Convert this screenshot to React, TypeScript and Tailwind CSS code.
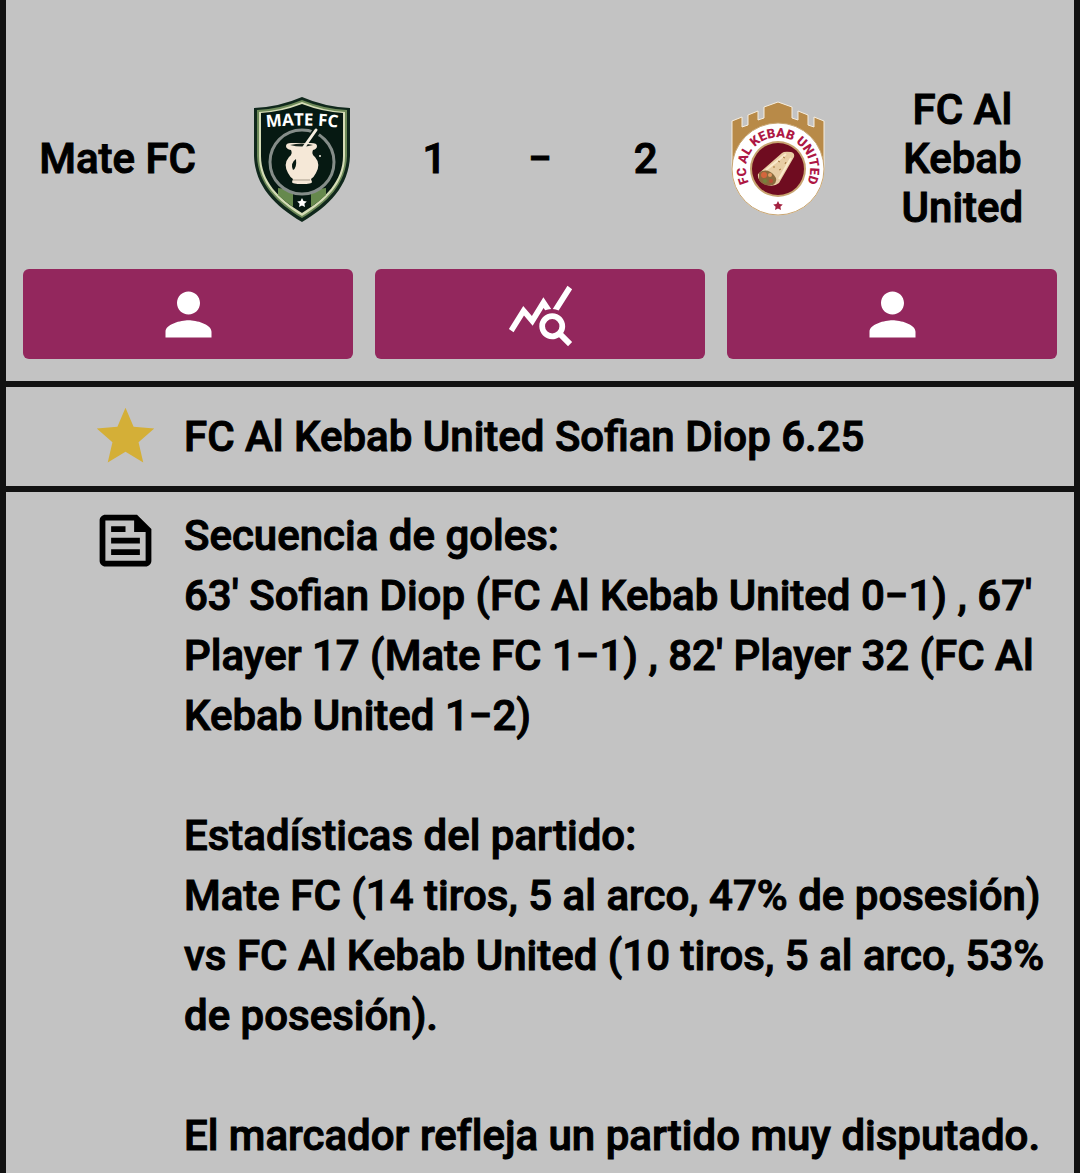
import {MdOutlineFeed, MdPerson, MdQueryStats, MdStar} from "react-icons/md";
import type {ReactNode} from "react";

type ActionButtonProps = {
  label: string;
  children: ReactNode;
};

type NoteRowProps = {
  icon: ReactNode;
  children: ReactNode;
  className?: string;
};

const goals = [
  {minute: 63, player: "Sofian Diop", team: "FC Al Kebab United", score: "0−1"},
  {minute: 67, player: "Player 17", team: "Mate FC", score: "1−1"},
  {minute: 82, player: "Player 32", team: "FC Al Kebab United", score: "1−2"}
];

const MateCrest = () => (
  <svg viewBox="0 0 98 126" className="w-[98px]" role="img" aria-label="Mate FC">
    <path
      d="M49 1 Q72 11 97 12 V60 C96 90 76 110 49 126 C22 110 2 90 1 60 V12 Q26 11 49 1Z"
      fill="#10281c"
    />
    <path
      d="M49 4 Q71 13 94 14 V60 C93 88 74 107 49 122 C24 107 5 88 4 60 V14 Q27 13 49 4Z"
      fill="#6d8a59"
    />
    <path
      d="M49 6 Q71 15 92 16 V60 C92 87 73 105 49 120 C25 105 6 87 6 60 V16 Q27 15 49 6Z"
      fill="#d5dcb6"
    />
    <path
      d="M49 8 Q70 16 90 17 V60 C90 85 72 103 49 117 C26 103 8 85 8 60 V17 Q28 16 49 8Z"
      fill="#061912"
    />
    <path d="M25 92 L40 94 V111 Q31 105 25 99Z" fill="#66894d" />
    <path d="M73 92 L58 94 V111 Q67 105 73 99Z" fill="#66894d" />
    <circle cx="49" cy="66" r="32" fill="#061912" stroke="#858d89" strokeWidth="3" />
    <path d="M51 54 L64 34" stroke="#061912" strokeWidth="8" />
    <path
      d="M33 50 Q33 47 38 47 H58 Q64 47 64 50 Q64 53 60 54 Q58 58 62 61 Q68 68 63 77 Q61 81 58 83 L59 86 Q59 88 49 88 Q39 88 39 86 L40 83 Q37 81 35 77 Q30 68 36 61 Q40 58 38 54 Q33 53 33 50Z"
      fill="#f5e8d7"
    />
    <path d="M37 49 Q49 46 60 49 Q49 52 37 49Z" fill="#18251c" />
    <path d="M51 51 L63 34" stroke="#f5eee0" strokeWidth="3" strokeLinecap="round" />
    <path d="M43 63 Q37 67 40 74 Q44 72 43 63Z" fill="#061912" />
    <path d="M40 84 H57" stroke="#a69c8b" strokeWidth="1" />
    <circle cx="67" cy="60" r="1" fill="#f5eee0" />
    <path
      d="M49 102 l1.5 3 3.3.4 -2.4 2.3 .6 3.3 -3-1.6 -3 1.6 .6-3.3 -2.4-2.3 3.3-.4Z"
      fill="#ffffff"
    />
    <path id="mate-arc" d="M8 32 Q49 27 90 32" fill="none" />
    <text
      fontSize="17"
      fontWeight="700"
      fill="#ffffff"
      className="font-['Open_Sans',sans-serif] [-webkit-text-stroke:0]"
    >
      <textPath href="#mate-arc" startOffset="50%" textAnchor="middle">
        MATE FC
      </textPath>
    </text>
  </svg>
);

const KebabCrest = () => (
  <svg
    viewBox="0 0 98 116"
    className="w-[98px]"
    role="img"
    aria-label="FC Al Kebab United"
  >
    <path
      d="M3 20 L13 16 V26 L19 24 V14 L29 10 V19 L35 17 V6 L49 1 L63 6 V17 L69 19 V10 L79 14 V24 L85 26 V16 L95 20 V68 A46 46 0 0 1 3 68Z"
      fill="#b88a48"
      stroke="#f6eee0"
      strokeWidth="1"
    />
    <circle cx="49" cy="68" r="46" fill="#ffffff" stroke="#c8a571" strokeWidth="1" />
    <circle cx="49" cy="68" r="28" fill="#c8a571" />
    <circle cx="49" cy="68" r="26" fill="#6f0c20" />
    <path id="kebab-arc" d="M33 96 A32 32 0 1 1 65 96" fill="none" />
    <text
      fontSize="13"
      fontWeight="900"
      fill="#ae1744"
      className="font-[Roboto,sans-serif] [-webkit-text-stroke:1px_#ae1744]"
    >
      <textPath href="#kebab-arc" startOffset="50%" textAnchor="middle">
        FC AL KEBAB UNITED
      </textPath>
    </text>
    <path d="M29 73 L53 52 Q55 50 62 51 Q66 52 65 56 L50 82 Q44 87 35 83 Q28 79 29 73Z" fill="#e8cda4" />
    <path d="M37 69 L57 53 M50 78 L62 57" stroke="#fae9cb" strokeWidth="2" />
    <path d="M30 72 Q38 66 45 74 Q50 80 44 84 Q35 86 30 79Z" fill="#8a6a3c" />
    <circle cx="35" cy="74" r="3" fill="#d4663d" />
    <circle cx="41" cy="74" r="2" fill="#e19a63" />
    <circle cx="36" cy="80" r="2" fill="#74833b" />
    <circle cx="42" cy="80" r="2" fill="#bb4e35" />
    <path d="M49 60 l2 1 M54 56 l2 1 M50 69 l2 -1 M56 63 l1 -2 M44 66 l2 0" stroke="#a4763f" />
    <path
      d="M49 100 l1.5 3 3.3.4 -2.4 2.3 .6 3.3 -3-1.6 -3 1.6 .6-3.3 -2.4-2.3 3.3-.4Z"
      fill="#a3203f"
    />
  </svg>
);

const ActionButton = ({label, children}: ActionButtonProps) => (
  <button
    type="button"
    aria-label={label}
    className="flex h-[90px] items-center justify-center rounded-md bg-[#93275d] text-white"
  >
    {children}
  </button>
);

const NoteRow = ({icon, children, className = ""}: NoteRowProps) => (
  <section
    className={`flex gap-6 border-t-6 border-[#121212] pr-6 pl-[85px] leading-[60px] ${className}`}
  >
    <div className="shrink-0">{icon}</div>
    <div className="min-w-0 flex-1">{children}</div>
  </section>
);

export default function App() {
  return (
    <main className="min-h-screen border-x-6 border-[#121212] bg-[#c3c3c3] font-[Roboto,sans-serif] text-[42px] font-medium text-black [-webkit-text-stroke:1px]">
      <header className="px-[17px] pt-[85px] pb-[22px]">
        <div className="-mx-[11px] grid grid-cols-[4fr_3fr_2fr_2fr_2fr_3fr_4fr] place-items-center text-center leading-[49px]">
          <h2>Mate FC</h2>
          <MateCrest />
          <span>1</span>
          <span>−</span>
          <span>2</span>
          <KebabCrest />
          <h2>FC Al Kebab United</h2>
        </div>

        <div className="mt-[37px] grid grid-cols-3 gap-[22px]">
          <ActionButton label="Mate FC">
            <MdPerson size={69} />
          </ActionButton>
          <ActionButton label="Estadísticas">
            <MdQueryStats size={69} />
          </ActionButton>
          <ActionButton label="FC Al Kebab United">
            <MdPerson size={69} />
          </ActionButton>
        </div>
      </header>

      <NoteRow
        icon={<MdStar size={69} className="text-[#d4af37]" />}
        className="items-center py-[15px]"
      >
        <p>FC Al Kebab United Sofian Diop 6.25</p>
      </NoteRow>

      <NoteRow icon={<MdOutlineFeed size={69} />} className="pt-[14px]">
        <h3>Secuencia de goles:</h3>
        <p>
          {goals
            .map(
              ({minute, player, team, score}) =>
                `${minute}' ${player} (${team} ${score})`
            )
            .join(" , ")}
        </p>
        <h3 className="mt-[60px]">Estadísticas del partido:</h3>
        <p>
          Mate FC (14 tiros, 5 al arco, 47% de posesión) vs FC Al Kebab United
          (10 tiros, 5 al arco, 53% de posesión).
        </p>
        <p className="mt-[60px] [font-variant-ligatures:none]">
          El marcador refleja un partido muy disputado.
        </p>
      </NoteRow>
    </main>
  );
}
